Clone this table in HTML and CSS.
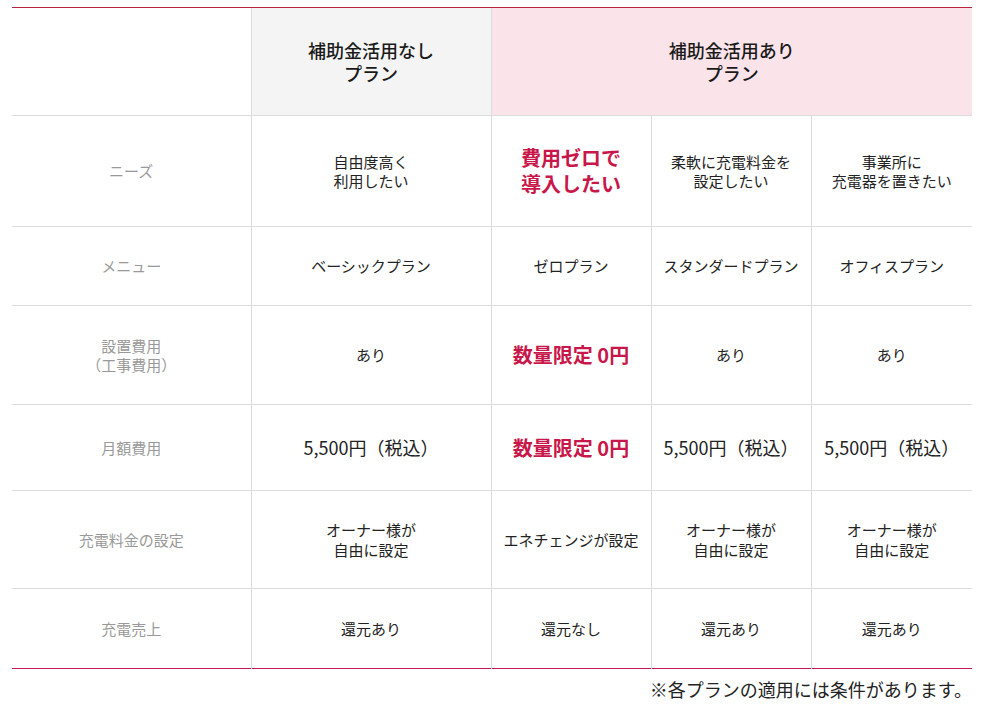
FILE: index.html
```html
<!DOCTYPE html>
<html lang="ja">
<head>
<meta charset="utf-8">
<title>プラン比較</title>
<link rel="stylesheet" href="styles.css">
</head>
<body>
<div class="page">
  <table class="plans">
    <colgroup>
      <col class="c-label"><col class="c-wide"><col class="c-narrow"><col class="c-narrow"><col class="c-last">
    </colgroup>
    <thead>
      <tr class="r-head">
        <th class="blank"></th>
        <th class="h-none">補助金活用なし<br>プラン</th>
        <th class="h-sub" colspan="3">補助金活用あり<br>プラン</th>
      </tr>
    </thead>
    <tbody>
      <tr class="r-needs">
        <th class="label">ニーズ</th>
        <td>自由度高く<br>利用したい</td>
        <td class="hot hot-lines">費用ゼロで<br>導入したい</td>
        <td>柔軟に充電料金を<br>設定したい</td>
        <td>事業所に<br>充電器を置きたい</td>
      </tr>
      <tr class="r-menu">
        <th class="label">メニュー</th>
        <td>ベーシックプラン</td>
        <td>ゼロプラン</td>
        <td>スタンダードプラン</td>
        <td>オフィスプラン</td>
      </tr>
      <tr class="r-setup">
        <th class="label">設置費用<br>（工事費用）</th>
        <td>あり</td>
        <td class="hot">数量限定 0円</td>
        <td>あり</td>
        <td>あり</td>
      </tr>
      <tr class="r-month">
        <th class="label">月額費用</th>
        <td class="price">5,500円（税込）</td>
        <td class="hot">数量限定 0円</td>
        <td class="price">5,500円（税込）</td>
        <td class="price">5,500円（税込）</td>
      </tr>
      <tr class="r-charge">
        <th class="label">充電料金の設定</th>
        <td>オーナー様が<br>自由に設定</td>
        <td>エネチェンジが設定</td>
        <td>オーナー様が<br>自由に設定</td>
        <td>オーナー様が<br>自由に設定</td>
      </tr>
      <tr class="r-sales">
        <th class="label">充電売上</th>
        <td>還元あり</td>
        <td>還元なし</td>
        <td>還元あり</td>
        <td>還元あり</td>
      </tr>
    </tbody>
  </table>
  <p class="note">※各プランの適用には条件があります。</p>
</div>
</body>
</html>
```

FILE: styles.css
```css
* { box-sizing: border-box; }
html, body { margin: 0; padding: 0; background: #fff; }
body {
  font-family: "Noto Sans CJK JP", "Noto Sans", sans-serif;
  color: #222;
}
.page {
  width: 960px;
  margin: 0 0 0 12px;
  padding-top: 7px;
}
.plans {
  width: 960px;
  border-collapse: collapse;
  table-layout: fixed;
  border-top: 1px solid #b8233f;
  border-bottom: 1px solid #c8174a;
}
.c-label { width: 239px; }
.c-wide { width: 240px; }
.c-narrow { width: 160px; }
.c-last { width: 161px; }
.plans th, .plans td {
  padding: 0 4px;
  text-align: center;
  vertical-align: middle;
  border-left: 1px solid #dcdcdc;
  border-top: 1px solid #dcdcdc;
  font-size: 15px;
  line-height: 19.5px;
  font-weight: 400;
}
.plans tr > :first-child { border-left: none; }
.plans thead th { border-top: 1px solid #b8233f; }
.plans .r-head th {
  height: 108px;
  font-size: 18px;
  line-height: 23px;
  font-weight: 500;
  color: #1a1a1a;
}
.plans .h-none { background: #f4f4f4; }
.plans .h-sub { background: #fae4ea; }
.plans .label { color: #999; }
.r-needs > * { height: 111px; }
.r-menu > * { height: 79px; }
.r-setup > * { height: 99px; }
.r-month > * { height: 86px; }
.r-charge > * { height: 98px; }
.r-sales > * { height: 80px; }
.plans td.price { font-size: 18px; }
.plans td.hot {
  color: #c8174a;
  font-weight: 700;
  font-size: 20px;
}
.plans td.hot-lines { line-height: 26px; }
.note {
  margin: 7px 0 0;
  text-align: right;
  font-size: 18px;
  line-height: 27px;
  color: #222;
}
```
